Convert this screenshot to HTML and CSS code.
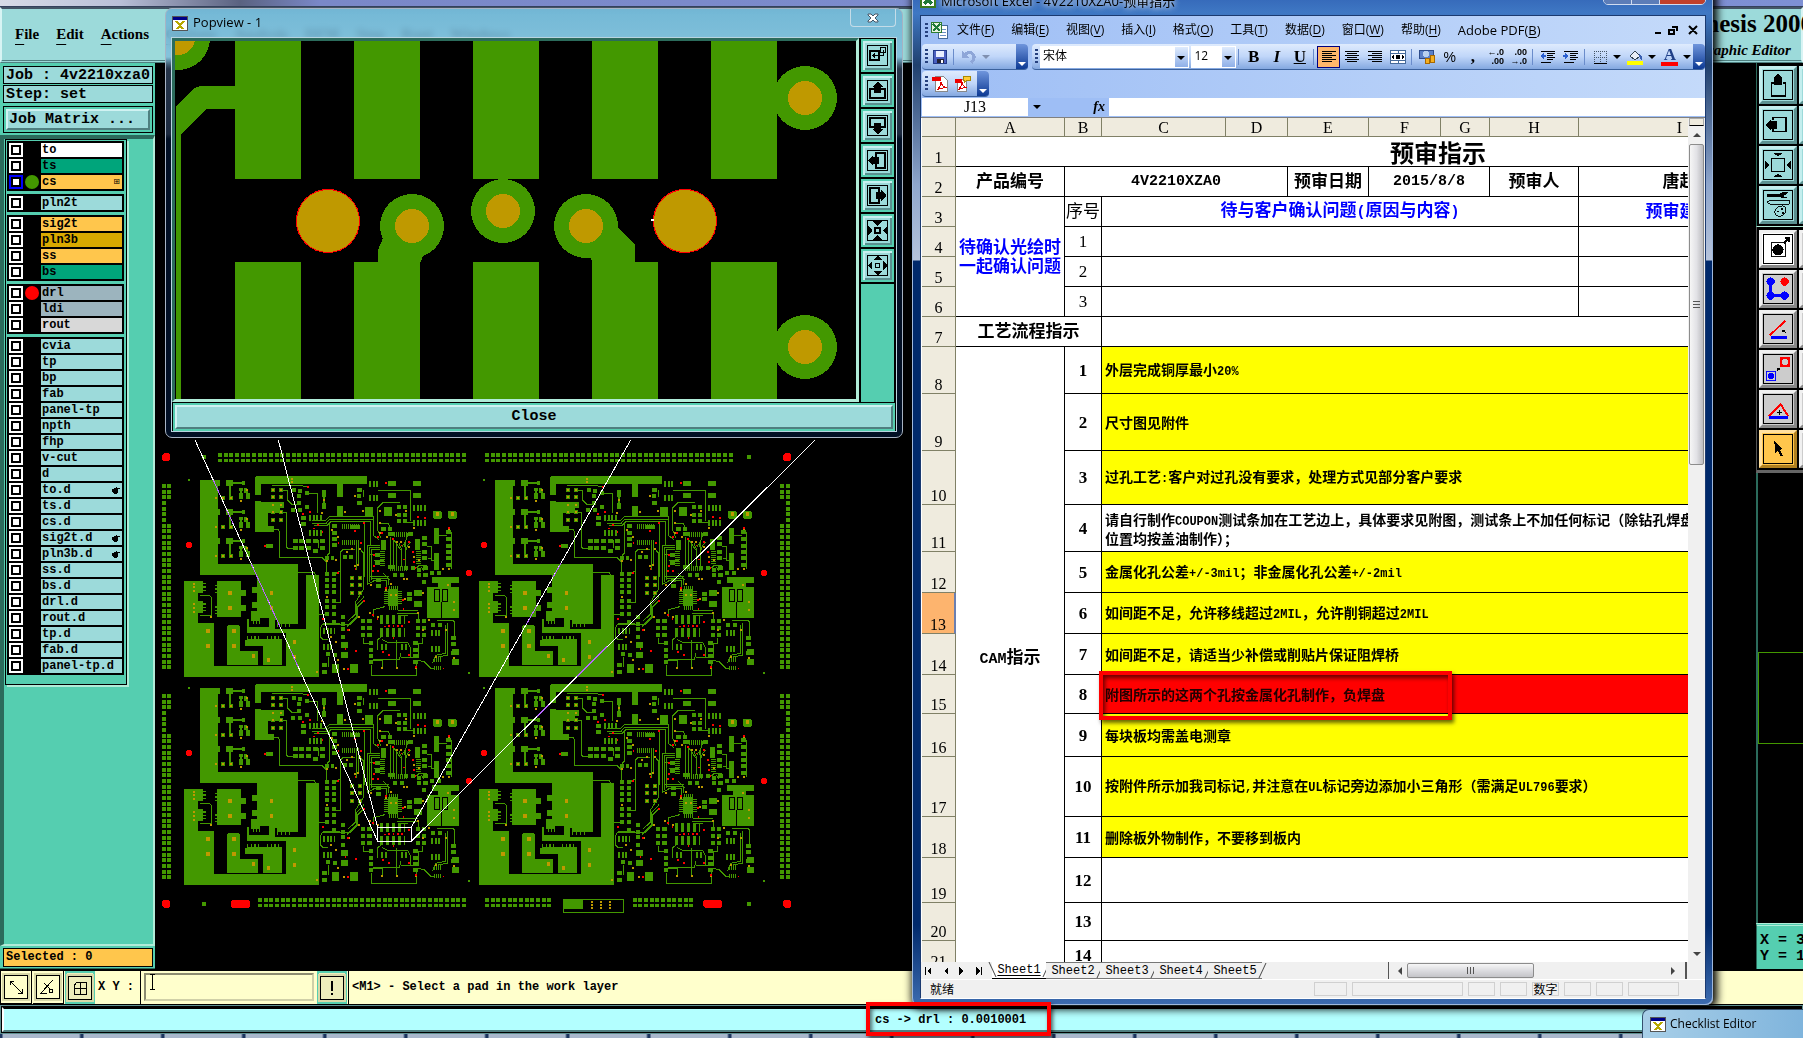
FILE: index.html
```html
<!DOCTYPE html>
<html lang="zh-CN">
<head>
  <meta charset="UTF-8" />
  <title>Genesis 2000 - Graphic Editor</title>
  <link rel="stylesheet" href="styles.css">
</head>
<body>
  <!-- Genesis main window -->
  <div class="genesis">
    <div class="strip-top"></div>
    <header class="menubar">
      <nav class="menus">
        <button><u>F</u>ile</button>
        <button><u>E</u>dit</button>
        <button><u>A</u>ctions</button>
        <button><u>O</u>ptions</button>
        <button>Analysis</button>
        <button>DFM</button>
        <button>Step</button>
        <button>Rout</button>
        <button>Windows</button>
      </nav>
      <div class="brand">
        <strong>Genesis 2000</strong>
        <em>Graphic Editor</em>
      </div>
    </header>

    <div class="work">
      <aside class="side">
        <div class="info">Job : 4v2210xza0</div>
        <div class="info">Step: set</div>
        <div class="matrix"><button class="bevel">Job Matrix ...</button></div>
        <div class="layer-area">
          <div class="layers">
            <div class="group">
              <label class="layer white"><input type="checkbox"><i></i><span>to</span></label>
              <label class="layer green"><input type="checkbox"><i></i><span>ts</span></label>
              <label class="layer orange work-layer"><input type="checkbox"><i class="dot-green"></i><span>cs<b>⊞</b></span></label>
            </div>
            <div class="group">
              <label class="layer"><input type="checkbox"><i></i><span>pln2t</span></label>
            </div>
            <div class="group">
              <label class="layer orange"><input type="checkbox"><i></i><span>sig2t</span></label>
              <label class="layer gold"><input type="checkbox"><i></i><span>pln3b</span></label>
              <label class="layer orange"><input type="checkbox"><i></i><span>ss</span></label>
              <label class="layer green"><input type="checkbox"><i></i><span>bs</span></label>
            </div>
            <div class="group">
              <label class="layer slate"><input type="checkbox"><i class="dot-red"></i><span>drl</span></label>
              <label class="layer slate"><input type="checkbox"><i></i><span>ldi</span></label>
              <label class="layer gray"><input type="checkbox"><i></i><span>rout</span></label>
            </div>
            <div class="group">
              <label class="layer"><input type="checkbox"><i></i><span>cvia</span></label>
              <label class="layer"><input type="checkbox"><i></i><span>tp</span></label>
              <label class="layer"><input type="checkbox"><i></i><span>bp</span></label>
              <label class="layer"><input type="checkbox"><i></i><span>fab</span></label>
              <label class="layer"><input type="checkbox"><i></i><span>panel-tp</span></label>
              <label class="layer"><input type="checkbox"><i></i><span>npth</span></label>
              <label class="layer"><input type="checkbox"><i></i><span>fhp</span></label>
              <label class="layer"><input type="checkbox"><i></i><span>v-cut</span></label>
              <label class="layer"><input type="checkbox"><i></i><span>d</span></label>
              <label class="layer"><input type="checkbox"><i></i><span>to.d<svg class="hand" viewBox="0 0 8 8"><path d="M0 3l3-1 2-2v2h3v1H6v3l-2 2H2L0 6z"/></svg></span></label>
              <label class="layer"><input type="checkbox"><i></i><span>ts.d</span></label>
              <label class="layer"><input type="checkbox"><i></i><span>cs.d</span></label>
              <label class="layer"><input type="checkbox"><i></i><span>sig2t.d<svg class="hand" viewBox="0 0 8 8"><path d="M0 3l3-1 2-2v2h3v1H6v3l-2 2H2L0 6z"/></svg></span></label>
              <label class="layer"><input type="checkbox"><i></i><span>pln3b.d<svg class="hand" viewBox="0 0 8 8"><path d="M0 3l3-1 2-2v2h3v1H6v3l-2 2H2L0 6z"/></svg></span></label>
              <label class="layer"><input type="checkbox"><i></i><span>ss.d</span></label>
              <label class="layer"><input type="checkbox"><i></i><span>bs.d</span></label>
              <label class="layer"><input type="checkbox"><i></i><span>drl.d</span></label>
              <label class="layer"><input type="checkbox"><i></i><span>rout.d</span></label>
              <label class="layer"><input type="checkbox"><i></i><span>tp.d</span></label>
              <label class="layer"><input type="checkbox"><i></i><span>fab.d</span></label>
              <label class="layer"><input type="checkbox"><i></i><span>panel-tp.d</span></label>
            </div>
          </div>
        </div>
        <div class="selected">Selected : 0</div>
      </aside>

      <main class="canvas">
        <svg class="pcb" viewBox="15 -1101 2271 2718">
          <defs>
            <!-- filter stage, repeated three times per board -->
            <g id="cell">
              <path fill="#439800" d="M204 150h6v18h-6zM228 150h21v18h-21zM249 156h27v-3h9v12h-9v-3h-27zM237 168h6v31h6v11h-12zM213 199h12v11h-12zM267 174h12v9h-3v7h3v18h-12v-18h3v-7h-3zM282 174h9v10h3v6h6v16h-12v-16h-6z"/>
              <path stroke="#bf9900" stroke-width="6" d="M195 204h6M216 204h6M240 204h6M288 181h6M270 212h6"/>
            </g>
            <g id="board">
              <g fill="#439800">
                <!-- copper areas -->
                <path d="M150 150h54v252h240v180h-24v9h-3v-9h-9v9h-3v-9h-9v9h-3v-9h-9v9h-3v-21h-6v27h93v-162h39v306H102V453h57v6h9v4h-9v6h9v4h-9v6h9v4h-9v6h-15v25h15v6h9v4h-9v6h9v4h-9v6h9v4h-9v6h-15v30h48v128h216v-99H291v-42h6v24h60v-27h-27v18h-3v-9h-6v9h-3v-9h-6v9h-3v-9h-6v-30h18v-10h-15v-17h15v-28h-15v-17h15v-37H150z"/>
                <path d="M201 453h72v27h15v17h-15v28h15v17h-15v18h-72v-8h-6v-4h6v-5h-6v-4h6v-6h-6v-4h6v-40h-6v-4h6v-6h-6v-4h6v-6h-6v-4h6z"/>
                <path d="M234 586h33l3 3v74h54v42h-93V589zM291 618h4v9h7v-9h4v9h7v-9h4v9h7v-9h4v9h23v-9h4v9h7v-9h4v9h7v-9h4v9h7v-9h4v9h8v78h-57v-57h-54v-18h6z"/>
                <path d="M318 138h333v24h-72v39h-18v-39H333v33h-18v-54zM315 213h18v3h69v18h-12v15h-36v39h18v17h-57z"/>
                <!-- pads -->
                <path d="M645 231h24v27h-24zM702 231h24v27h-24zM561 228h18v33h-18zM714 153h24v14h-24zM789 153h24v14h-24zM714 189h24v14h-24zM789 189h24v14h-24zM852 294h15v47h-15zM852 369h15v50h-15zM792 480h24v18h-24zM792 513h24v18h-24zM573 636h21v18h-21zM573 666h21v18h-21zM546 702h21v27h-21zM600 702h24v27h-24zM516 700h15v12h-15zM516 720h15v12h-15zM906 657h21v18h-21zM906 687h21v18h-21zM348 342h21v12h-21zM516 180h12v20h-3v18h3v18h-12v-18h3v-18h-3zM714 478h30v51h-30zM846 441h81v17h-24v12h24v93h-96v-93h32v-12h-17zM693 330h15v30h-15zM795 327h15v34h-15zM601 284h29v12h-29z"/>
                <rect x="849" y="242" width="27" height="25" rx="7"/>
                <rect x="894" y="242" width="27" height="25" rx="7"/>
              </g>
              <path stroke="#439800" stroke-width="12" d="M363 180h12M387 180h12M363 201h12M387 201h12M363 225h12M363 247h12M387 247h12M363 270h12M387 270h12M426 180h12M444 183h12M465 188h12M442 198h12M442 219h12M465 231h12M424 240h12M443 240h12M453 264h14M453 283h14M429 334h15M447 334h15M468 334h15M489 334h15M510 334h15M429 354h15M447 354h15M468 354h15M489 363h15M510 354h15M546 288h15M546 309h15M546 327h15M546 345h15M526 384h12M543 384h9M580 380h12M597 380h12M525 432h12M546 432h12M525 450h12M546 450h12M525 468h12M546 468h12M525 486h12M546 486h12M525 513h12M546 513h12M525 531h12M546 531h12M525 552h12M546 552h12M546 576h12M600 444h12M624 444h12M600 466h12M624 466h12M600 489h12M624 489h12M573 561h12M573 582h12M573 597h12M573 621h12M621 180h15M621 199h12M621 218h15M741 231h12M760 231h12M741 254h12M760 254h12M741 272h12M760 272h12M694 297h14M713 297h12M714 313h18M774 313h15M816 324h15M816 342h15M816 366h15M816 384h15M889 306h14M889 327h14M889 348h14M889 366h14M889 384h14M889 405h14M783 415h12M801 421h12M820 415h14M801 436h12M820 436h14M840 430h12M860 430h12M816 457h12M771 491h14M771 507h14M675 375h15M675 399h15M714 412h21M762 415h12M729 436h12M750 436h12M678 450h15M678 468h15M633 574h12M652 574h14M633 595h12M652 595h14M633 616h12M652 616h14M798 574h12M816 574h12M798 595h12M816 595h12M798 616h12M816 616h12M657 639h12M657 660h12M657 678h12M657 697h12M790 639h14M790 660h14M790 678h14M790 697h14M843 586h12M864 586h12M904 624h14M904 642h14M904 669h14M528 673h12M549 675h12"/>
              <!-- IC footprints -->
              <g stroke="#439800">
                <path stroke-width="18" stroke-dasharray="6 5" d="M477 264h42M477 309h42M657 162h30M657 205h30M789 234h39M789 279h39M519 603h36M519 651h30M843 609h30M843 656h30M693 651h20M753 651h20"/>
                <path stroke-width="27" stroke-dasharray="10 8" d="M690 568h74M690 607h74"/>
                <path stroke-width="14" stroke-dasharray="3 3" d="M732 313h42M720 416h54M576 290h54M576 338h50M717 474h26M717 533h26M853 689h20M853 714h20"/>
                <path stroke-width="15" stroke-dasharray="3 3" d="M697 362v46M804 362v42M708 482v44M749 482v44"/>
              </g>
              <!-- traces -->
              <g fill="none" stroke="#439800" stroke-width="3">
                <path d="M366 166h84l24 6M399 180h14v30l12 12h20M470 190h32v60M399 247h9v102l4 5h17M372 299h12l5 6v77h126l14 14v30M444 428h48l5 6v112l6 6h22M486 272h40l12-12h132v56l18 14M486 280h42l12-13h128M492 286h40l12-12h118v70M537 280v90l-6 8M684 180h96v94M750 217h-50l-17 17v66l10 24M616 357h-36l-9 9v150h-14M618 345v76M624 345v60M643 282v160M630 357l10 12v110l-24 38v36l-22 20M641 512l-20 20v30l-20 22h-84l-5 8v30l6 6h16M690 345h-37v118l24-12M690 351h-31v106M690 357h-26v92M658 438h60M664 444h50v20M670 450h40v24M720 320v90M729 325v86M738 345v66M747 340l8 20v50M756 350l9-12v78M765 366l8-20 10-10M690 280h24l12 24M732 330l20 30M774 310l-12 40M831 348h14v44h10M833 384l14 0M867 315h24M903 306v110M831 407h-24l-8 8M150 495h27l6 6v56h-32M668 540l36-10M669 562v-22M741 549h64v20M744 540h60M744 556h30M663 705v32h136v-40M669 688h80l3-18M669 690l27 0v24M739 630v84M696 628l16 8h60l10 20v28M639 625l0 14 18 2M684 660l-2-30 10-8M804 690l20 6 18 18h12M862 570h46l6 6v46M893 580v96l-30 4M887 586v84l-30 6-10 24M804 640v43h-50M816 623v16h-14M534 680v30M570 580h-52M590 590l30-30v-36l22-24M555 432l16-10M812 410l10 12M762 276h30M640 200v-20M504 330v24M680 372h-20M672 390h30M700 430l20 20"/>
                <path stroke="#000" d="M853 479h16v36h-16zM877 479h16v36h-16zM873 515v48"/>
              </g>
              <use href="#cell"/>
              <use href="#cell" y="87"/>
              <use href="#cell" y="174"/>
              <!-- drilled holes -->
              <g stroke="#bf9900">
                <path stroke-width="6" d="M129 463h6M129 472h6M129 483h6M129 522h6M129 534h6M129 546h6M423 147h6M423 156h6M366 180h6M390 180h6M366 201h6M390 201h6M366 225h6M390 225h6M366 247h6M390 247h6M366 270h6M390 270h6M603 444h6M627 444h6M603 466h6M627 466h6M603 489h6M627 489h6M720 495h6M735 495h6M519 210h6M613 199h6M582 246h6M513 249h6M636 244h6M687 244h6M765 243h6M735 254h6M687 279h6M789 294h6M894 297h6M543 299h6M562 320h6M604 357h6M627 357h6M687 309h6M708 320h6M738 336h6M750 336h6M774 350h6M789 380h6M804 390h6M894 417h6M876 417h6M528 393h6M555 390h6M588 366h6M612 408h6M621 405h6M660 465h6M528 500h6M705 480h6M720 462h6M760 446h6M768 446h6M816 489h6M762 508h6M801 549h6M657 549h6M680 562h6M624 562h6M834 570h6M594 600h6M555 636h6M540 620h6M498 726h6M579 718h6M693 714h6M738 714h6M795 714h6M909 516h6M909 540h6M890 465h6M180 560h6M816 600h6M885 600h6M909 684h6M561 690h6M855 680h6"/>
                <path stroke-width="12" d="M234 489h12M234 534h12M360 489h9M360 534h9M168 604h12M246 604h12M168 649h12M246 649h12M429 636h9M429 682h9M306 677h9M351 689h9M857 253h10M902 253h10"/>
              </g>
              <path stroke="#f00" stroke-width="5" d="M471 171h5M456 252h5M478 246h5M501 285h5M490 295h5M515 305h5M563 338h5M343 348h5M612 303h5M630 339h5M640 279h5M705 159h5M801 261h5M822 264h5M894 294h5M682 321h5M727 327h5M694 309h5M774 336h5M752 346h5M786 366h5M789 396h5M759 388h5M669 375h5M669 408h5M667 423h5M682 423h5M794 414h5M562 429h5M614 417h5M640 513h5M706 474h5M756 510h5M758 537h5M666 554h5M680 567h5M702 589h5M714 588h5M728 588h5M741 588h5M754 588h5M774 576h5M728 624h5M517 566h5M592 600h5M696 666h5M714 675h5M774 675h5M616 662h5M584 657h5M592 717h5M878 715h5M795 711h5"/>
              <path fill="#f00" d="M112 336h10l4 4v10l-4 4h-10l-4-4v-10zM952 420h10l4 4v10l-4 4h-10l-4-4v-10z"/>
              <path fill="#439800" d="M114 147h6v6h-6zM954 726h6v6h-6z"/>
            </g>
          </defs>
          <use href="#board"/>
          <use href="#board" x="885"/>
          <use href="#board" y="624"/>
          <use href="#board" x="885" y="624"/>
          <!-- coupon strips around the panel -->
          <g stroke="#439800" stroke-dasharray="12 5">
            <path stroke-width="12" d="M204 75h744M1005 75h744M324 1410h624M1005 1410h201M1448 1410h181"/>
            <path stroke-width="9" d="M204 91h744M1005 91h744M324 1426h624M1005 1426h201M1448 1426h181"/>
            <path stroke-width="12" d="M42 162v555M57 162v45M57 281v436M42 792v555M57 792v45M57 911v436M1896 162v45M1896 281v436M1914 162v555M1896 792v45M1896 911v436M1914 792v555"/>
          </g>
          <path fill="#439800" d="M156 75h12v12h-12zM1791 75h12v12h-12zM156 1416h12v12h-12zM1791 1416h12v12h-12zM1241 1408h58v30h-58z"/>
          <path fill="none" stroke="#439800" stroke-width="3" d="M1241 1408h180v38h-180z"/>
          <path fill="none" stroke="#bf9900" stroke-width="6" stroke-dasharray="6 4" d="M1325 1412v28M1353 1412v28M1381 1412v28"/>
          <path fill="#f00" d="M42 69h13l6 6v13l-6 6H42l-6-6V75zM1905 69h13l6 6v13l-6 6h-13l-6-6V75zM42 1409h13l6 6v13l-6 6H42l-6-6v-13zM1905 1409h13l6 6v13l-6 6h-13l-6-6v-13zM248 1409h46l6 6v13l-6 6h-46l-6-6v-13zM1665 1409h46l6 6v13l-6 6h-46l-6-6v-13z"/>
          <!-- popview leader lines, tinted where they cross copper -->
          <g fill="none" stroke-width="3">
            <path stroke="#fff" d="M135 30L683 1234M385 30L683 1192M1442 30L784 1192M1995 30L784 1234M683 1192h101v42H683z"/>
            <path stroke="#b766ff" d="M190 150L210 195M230 240L250 282M304 402L390 590M420 656L444 710M1233 400L1210 440M1160 528L1130 582M1371 650L1281 740M1195 825L1160 860"/>
          </g>
        </svg>
      </main>

      <aside class="tools">
        <div class="tool-grid teal">
          <button class="tool" aria-label="Pan up"><svg viewBox="0 0 30 30"><path fill="none" stroke="#000" stroke-width="2" d="M11 13H8v14h15V13h-3"/><path d="M10 8l5-5 5 5h-1v7h-8V8z"/></svg></button><span></span>
          <button class="tool" aria-label="Pan left"><svg viewBox="0 0 30 30"><path fill="none" stroke="#000" stroke-width="2" d="M10 10V7h14v15H10v-3"/><path d="M7 10l-5 5 5 5v-1h7v-8H7z"/></svg></button><span></span>
          <button class="tool" aria-label="Zoom fit"><svg viewBox="0 0 30 30"><path fill="none" stroke="#000" stroke-width="2" d="M8 8h14v14H8z"/><path d="M10 2h10l-5 4zM10 28h10l-5-4zM1 10v10l5-5zM29 10v10l-5-5z"/></svg></button><span></span>
          <button class="tool" aria-label="Settings"><svg viewBox="0 0 30 30"><path d="M3 3h14l3-2h6l-3 3h-2v2h2l3 2h-6l-3-2H3z"/><path fill="none" stroke="#000" d="M3 12l4-2h20v4H7zM12 20q3-4 8-4 5 1 3 6-1 5-7 5-6-1-4-7z"/><path d="M14 21h2v2h-2zM18 18h2v2h-2zM19 23h2v2h-2z"/></svg></button><span></span>
        </div>
        <div class="tool-grid silver">
          <button class="tool white" aria-label="Select pad"><svg viewBox="0 0 30 30"><path fill="none" stroke="#000" d="M7.500 8.500h15v15h-15z"/><circle cx="15" cy="16" r="6"/><path d="M20 8l4-4h-2V2h6v6h-2V6l-4 4z"/></svg></button><span></span>
          <button class="tool" aria-label="Net"><svg viewBox="0 0 30 30"><path stroke="#00f" stroke-width="3" fill="none" d="M7 7v15h15"/><g fill="#00f"><circle cx="7" cy="7" r="4.500"/><circle cx="7" cy="22" r="4.500"/><circle cx="22" cy="22" r="4.500"/></g><circle cx="22" cy="7" r="4.500" fill="#f00"/></svg></button><span></span>
          <button class="tool" aria-label="Angle"><svg viewBox="0 0 30 30"><path stroke="#f00" stroke-width="2" d="M6 22L23 6"/><path stroke="#00f" stroke-width="3" d="M7 24.500h18"/><path d="M19 16h4l-1 1 2 3-3-2-1 1z"/></svg></button><span></span>
          <button class="tool" aria-label="Snap"><svg viewBox="0 0 30 30"><path fill="none" stroke="#00f" d="M2.500 17.500h10v10h-10z"/><circle cx="7.500" cy="22.500" r="3.500" fill="#00f"/><path fill="#f00" d="M17 2h11v11H17z"/><circle cx="22.500" cy="7.500" r="3.500" fill="#ccc"/><path d="M14 14h3v3l-1-1-2 1z"/></svg></button><span></span>
          <button class="tool" aria-label="Measure"><svg viewBox="0 0 30 30"><path fill="none" stroke="#f00" stroke-width="2" d="M5 23L18 10l8 13"/><path stroke="#00f" stroke-width="3" d="M5 24h21"/><path d="M14 18h5v1h-5zM16 16h1v5h-1z"/></svg></button><span></span>
          <button class="tool orange" aria-label="Pointer"><svg viewBox="0 0 30 30"><path d="M11 6l9 9-3 1 3 6-2 1-3-6-3 3z"/></svg></button><span></span>
        </div>
        <div class="overview"><div></div></div>
        <div class="coords">X = 3<br>Y = 1</div>
      </aside>
    </div>

    <div class="msgbar">
      <button class="mini" aria-label="Distance"><svg viewBox="0 0 20 20"><path fill="none" stroke="#000" d="M4 4l12 12M4 8V4h4M16 12v4h-4"/></svg></button>
      <button class="mini" aria-label="Angle"><svg viewBox="0 0 20 20"><path fill="none" stroke="#000" d="M15 3L3 16h6M6 6l6 6"/><circle cx="13" cy="14" r="2" fill="none" stroke="#000"/></svg></button>
      <button class="mini on" aria-label="Grid"><svg viewBox="0 0 20 20"><path fill="none" stroke="#000" d="M7 4h9v12H4V8zM10.500 4v12M4 10.500h12"/></svg></button>
      <label for="xy">X Y :</label>
      <input id="xy" type="text" value="">
      <button class="mini on" aria-label="Info"><svg viewBox="0 0 20 20"><path d="M9 3h2v10H9zM9 15h2v2H9z"/></svg></button>
      <p>&lt;M1&gt; - Select a pad in the work layer</p>
    </div>
    <div class="statusbar"><div>cs -&gt; drl : 0.0010001</div></div>
    <div class="taskbar"></div>
  </div>
  <svg class="ibeam" viewBox="0 0 5 16"><path fill="none" stroke="#000" d="M0 .500h5M0 15.500h5M2.500 0v16"/></svg>

  <!-- Popview window -->
  <section class="popview">
    <header class="pop-title">
      <svg class="xicon" viewBox="0 0 16 15"><path fill="#fff" stroke="#555" d="M.500.500h15v14H.500z"/><path fill="#008" d="M1 1h14v3H1z"/><path stroke="#b8a800" stroke-width="2" d="M4 5l7 8M12 5l-7 8"/></svg>
      <span>Popview - 1</span>
      <button class="pop-x" aria-label="Close window"><svg viewBox="0 0 12 10"><path fill="#fff" stroke="#456" d="M1 1h3l2 2 2-2h3v1L8 5l3 3v1H8L6 7 4 9H1V8l3-3-3-3z"/></svg></button>
    </header>
    <div class="pop-body">
      <div class="pop-main">
        <svg class="zoomed" viewBox="175 41 681 360" preserveAspectRatio="xMinYMin slice">
          <g fill="#439800">
            <path d="M235 41h66v138h-66zM354 41h66v138h-66zM473 41h66v138h-66zM592 41h66v138h-66zM711 41h66v138h-66z"/>
            <path d="M235 262h66v139h-66zM354 262h66v139h-66zM473 262h66v139h-66zM592 262h66v139h-66zM711 262h66v139h-66z"/>
            <path d="M235 86h-35l-6 2-18 18v295h5V134l25-25h29zM378 262v-12l5-12h50l-10 18-2 6zM610 220l8 8 17 16v18h-43l-2-10z"/>
            <circle cx="178" cy="38" r="32"/><circle cx="412" cy="226" r="32"/><circle cx="503" cy="211" r="32"/>
            <circle cx="586" cy="226" r="32"/><circle cx="805" cy="98" r="32"/><circle cx="805" cy="347" r="32"/>
          </g>
          <g fill="#bf9900">
            <circle cx="178" cy="38" r="17"/><circle cx="412" cy="226" r="17"/><circle cx="503" cy="211" r="17"/>
            <circle cx="586" cy="226" r="17"/><circle cx="805" cy="98" r="17"/><circle cx="805" cy="347" r="17"/>
            <circle cx="328" cy="221" r="31.500" stroke="#f00"/><circle cx="685" cy="221" r="31.500" stroke="#f00"/>
          </g>
          <path fill="#fff" d="M651 219h3v2h-3z"/>
        </svg>
        <div class="pop-tools">
          <button aria-label="Link view"><svg viewBox="0 0 21 21"><path fill="none" stroke="#000" stroke-width="2" d="M3 6h9v9H3z"/><path fill="none" stroke="#000" d="M13.500 2.500h5v5h-5zM6 10.500h10.500V5M8 8.500l-2 2 2 2"/></svg></button>
          <button aria-label="Up"><svg viewBox="0 0 21 21"><path fill="none" stroke="#000" stroke-width="2" d="M7 9H3v9h15V9h-4"/><path d="M5 7l5-5h1l5 5h-2v6H7V7z"/></svg></button>
          <button aria-label="Down"><svg viewBox="0 0 21 21"><path fill="none" stroke="#000" stroke-width="2" d="M7 12H3V3h15v9h-4"/><path d="M5 14l5 5h1l5-5h-2V8H7v6z"/></svg></button>
          <button aria-label="Left"><svg viewBox="0 0 21 21"><path fill="none" stroke="#000" stroke-width="2" d="M9 7V3h9v15H9v-4"/><path d="M6 5l-5 5v1l5 5v-2h6V7H6z"/></svg></button>
          <button aria-label="Right"><svg viewBox="0 0 21 21"><path fill="none" stroke="#000" stroke-width="2" d="M12 7V3H3v15h9v-4"/><path d="M14 5l5 5v1l-5 5v-2H9V7h5z"/></svg></button>
          <button aria-label="Zoom in"><svg viewBox="0 0 21 21"><path fill="none" stroke="#000" stroke-width="2" d="M8 8h5v5H8z"/><path d="M6 1h9l-4 5h-1zM6 20h9l-4-5h-1zM1 6v9l4-4v-1zM20 6v9l-4-4v-1z"/></svg></button>
          <button aria-label="Zoom out"><svg viewBox="0 0 21 21"><path fill="none" stroke="#000" d="M8.500 8.500h4v4h-4z"/><path d="M6 5l4-4h1l4 4zM6 16l4 4h1l4-4zM5 6l-4 4v1l4 4zM16 6l4 4v1l-4 4z"/></svg></button>
          <div class="fill"></div>
        </div>
      </div>
      <div class="pop-foot"><button class="bevel">Close</button></div>
    </div>
  </section>

  <!-- Excel window -->
  <section class="excel">
    <header class="xl-title">
      <svg class="xl-logo" viewBox="0 0 16 16"><path fill="#fff" stroke="#3a7a20" stroke-width="2" d="M1 1h14v14H1z"/><path stroke="#1f7a3a" stroke-width="3" d="M4 4l8 8M12 4l-8 8"/></svg>
      <span>Microsoft Excel - 4V2210XZA0-预审指示</span>
      <div class="caps"><i></i><i></i><i></i></div>
    </header>
    <div class="xl-body">
      <nav class="xl-menu">
        <i class="grip"></i>
        <svg class="xl-doc" viewBox="0 0 17 17"><path fill="#fff" stroke="#456a9a" d="M7.500 3.500h9v13h-9z"/><path stroke="#6b8fc4" d="M9 7.500h6M9 10.500h6M9 13.500h6"/><path fill="#e8f4e0" stroke="#2f7d32" d="M.500.500h10v10H.500z"/><path stroke="#1f7a3a" stroke-width="2" d="M2 2l7 7M9 2L2 9"/></svg>
        <button>文件(<u>F</u>)</button>
        <button>编辑(<u>E</u>)</button>
        <button>视图(<u>V</u>)</button>
        <button>插入(<u>I</u>)</button>
        <button>格式(<u>O</u>)</button>
        <button>工具(<u>T</u>)</button>
        <button>数据(<u>D</u>)</button>
        <button>窗口(<u>W</u>)</button>
        <button>帮助(<u>H</u>)</button>
        <button class="adobe">Adobe PDF(<u>B</u>)</button>
        <svg class="mdi" viewBox="0 0 44 10"><path fill="none" stroke="#000" stroke-width="2" d="M0 8h6M14 5h5v4h-5zM17 2h5v4M34 1l8 8M42 1l-8 8"/></svg>
      </nav>
      <div class="bars">
        <div class="bar first">
          <i class="grip"></i>
          <button class="tb" aria-label="保存"><svg viewBox="0 0 16 16"><path fill="#4a5fc0" stroke="#223a8a" d="M1.500 1.500h13v13h-13z"/><path fill="#e8eeff" d="M4 2h8v6H4z"/><path fill="#223" d="M5 10h7v4H5z"/><path fill="#fff" d="M9 11h2v3H9z"/></svg></button>
          <i class="sep"></i>
          <button class="tb" aria-label="撤销"><svg viewBox="0 0 16 16"><path fill="none" stroke="#8ea6d8" stroke-width="3" d="M2 7q6-6 10-2 3 4-2 9"/><path fill="#8ea6d8" d="M1 2v7h7z"/></svg></button>
          <i class="tri dim"></i>
          <i class="cap"></i>
        </div>
        <div class="bar wide">
          <i class="grip"></i>
          <span class="combo font"><select aria-label="字体"><option>宋体</option></select></span>
          <span class="combo size"><select aria-label="字号"><option>12</option></select></span>
          <i class="sep"></i>
          <button class="tb letter"><b>B</b></button>
          <button class="tb letter"><b><em>I</em></b></button>
          <button class="tb letter"><b><u>U</u></b></button>
          <i class="sep"></i>
          <button class="tb on" aria-label="左对齐"><svg viewBox="0 0 16 16"><path stroke="#000" d="M1 2.500h14M1 4.500h10M1 6.500h14M1 8.500h10M1 10.500h14M1 12.500h10"/></svg></button>
          <button class="tb" aria-label="居中"><svg viewBox="0 0 16 16"><path stroke="#000" d="M1 2.500h14M3 4.500h10M1 6.500h14M3 8.500h10M1 10.500h14M3 12.500h10"/></svg></button>
          <button class="tb" aria-label="右对齐"><svg viewBox="0 0 16 16"><path stroke="#000" d="M1 2.500h14M5 4.500h10M1 6.500h14M5 8.500h10M1 10.500h14M5 12.500h10"/></svg></button>
          <button class="tb" aria-label="合并及居中"><svg viewBox="0 0 16 16"><path fill="#fff" stroke="#456a9a" d="M.500 1.500h15v13H.500zM.500 4.500h15M.500 11.500h15M8 1v3M8 12v3"/><path d="M1 8l3-2v4zM15 8l-3-2v4zM6 6h4v4H6z"/></svg></button>
          <i class="sep"></i>
          <button class="tb" aria-label="货币样式"><svg viewBox="0 0 16 16"><path fill="#5a80c8" stroke="#2d4c8c" d="M.500 1.500h14v8H.500z"/><circle cx="7" cy="5" r="3" fill="#b8d0f0"/><path fill="#f5b020" stroke="#a86800" d="M6.500 9.500h4v5h-4zM11.500 6.500h4v7h-4z"/></svg></button>
          <button class="tb pct">%</button>
          <button class="tb letter"><b>,</b></button>
          <button class="tb dec"><span>←.0<br>.00</span></button>
          <button class="tb dec"><span>.00<br>→.0</span></button>
          <i class="sep"></i>
          <button class="tb" aria-label="减少缩进"><svg viewBox="0 0 16 16"><path stroke="#000" d="M1 2.500h14M7 4.500h8M7 6.500h6M7 8.500h8M7 10.500h6M1 13.500h10"/><path fill="#2a5fd0" d="M0 7l4-3v2h2v2H4v2z"/></svg></button>
          <button class="tb" aria-label="增加缩进"><svg viewBox="0 0 16 16"><path stroke="#000" d="M1 2.500h14M7 4.500h8M7 6.500h6M7 8.500h8M7 10.500h6M1 13.500h10"/><path fill="#2a5fd0" d="M6 7L2 4v2H0v2h2v2z"/></svg></button>
          <i class="sep"></i>
          <button class="tb" aria-label="边框"><svg viewBox="0 0 16 16"><path fill="none" stroke="#456" stroke-dasharray="1 1" d="M2.500 2v11M8.500 2v11M14.500 2v11M2 2.500h13M2 8.500h13"/><path stroke="#000" d="M2 14.500h13"/></svg></button>
          <i class="tri"></i>
          <button class="tb" aria-label="填充颜色"><svg viewBox="0 0 16 16"><path fill="#e8eef8" stroke="#345" d="M3 7l5-5 5 5-5 4z"/><path fill="#3a5fb0" d="M12 5l3 2v5l-2-2z"/><path fill="#ff0" d="M0 12h16v4H0z"/></svg></button>
          <i class="tri"></i>
          <button class="tb fontcolor" aria-label="字体颜色"><b>A</b></button>
          <i class="tri"></i>
          <i class="cap"></i>
        </div>
      </div>
      <div class="bars">
        <div class="bar pdf">
          <i class="grip"></i>
          <button class="tb" aria-label="转换为 PDF"><svg viewBox="0 0 16 16"><path fill="#fff" stroke="#888" d="M3.500.500h8l4 4v11h-12z"/><path fill="#e00" d="M0 1h9v4H0z"/><path fill="none" stroke="#d00" d="M5 14q4-4 4-8 1 5 6 6-5-1-10 2z"/></svg></button>
          <button class="tb" aria-label="转换并发送"><svg viewBox="0 0 16 16"><path fill="#fff" stroke="#888" d="M2.500 3.500h9v12h-9z"/><path fill="#e00" d="M0 3h7v4H0z"/><path fill="none" stroke="#d00" d="M3 14q4-4 4-8 1 5 5 6-5-1-9 2z"/><path fill="#fc3" stroke="#a80" d="M8.500.500h7v4h-4l-2 2v-2h-1z"/></svg></button>
          <i class="cap"></i>
        </div>
      </div>
      <div class="formula">
        <input class="namebox" type="text" value="J13" aria-label="名称框">
        <i class="tri"></i>
        <em>fx</em>
        <input class="fx" type="text" value="" aria-label="编辑栏">
      </div>

      <div class="grid-area">
        <div class="sheet">
          <table>
            <colgroup><col class="c0"><col class="ca"><col class="cb"><col class="cc"><col class="cd"><col class="ce"><col class="cf"><col class="cg"><col class="ch"><col class="ci"><col class="cj"></colgroup>
            <tr class="head"><th></th><th>A</th><th>B</th><th>C</th><th>D</th><th>E</th><th>F</th><th>G</th><th>H</th><th>I</th><th></th></tr>
            <tr class="h30"><th>1</th><td colspan="10" class="title">预审指示</td></tr>
            <tr class="h30 strong"><th>2</th><td>产品编号</td><td colspan="3" class="mono">4V2210XZA0</td><td>预审日期</td><td colspan="2" class="mono">2015/8/8</td><td>预审人</td><td>唐超</td><td></td></tr>
            <tr class="h30 strong"><th>3</th><td rowspan="4" class="blue wrap">待确认光绘时<br>一起确认问题</td><td class="plain">序号</td><td colspan="6" class="blue">待与客户确认问题<span class="mono">(</span>原因与内容<span class="mono">)</span></td><td class="blue">预审建议</td><td></td></tr>
            <tr class="h30"><th>4</th><td>1</td><td colspan="6"></td><td></td><td></td></tr>
            <tr class="h30"><th>5</th><td>2</td><td colspan="6"></td><td></td><td></td></tr>
            <tr class="h30"><th>6</th><td>3</td><td colspan="6"></td><td></td><td></td></tr>
            <tr class="h30 strong"><th>7</th><td colspan="2">工艺流程指示</td><td colspan="8"></td></tr>
            <tr class="h47"><th>8</th><td rowspan="14" class="cam"><span class="mono">CAM</span>指示</td><td class="no">1</td><td colspan="8" class="note">外层完成铜厚最小<span class="en">20%</span></td></tr>
            <tr class="h57"><th>9</th><td class="no">2</td><td colspan="8" class="note">尺寸图见附件</td></tr>
            <tr class="h54"><th>10</th><td class="no">3</td><td colspan="8" class="note">过孔工艺<span class="en">:</span>客户对过孔没有要求，处理方式见部分客户要求</td></tr>
            <tr class="h47"><th>11</th><td class="no">4</td><td colspan="8" class="note clear">请自行制作<span class="en">COUPON</span>测试条加在工艺边上，具体要求见附图，测试条上不加任何标记（除钻孔焊盘<br>位置均按盖油制作）；</td></tr>
            <tr class="h41"><th>12</th><td class="no">5</td><td colspan="8" class="note">金属化孔公差<span class="en">+/-3mil</span>；非金属化孔公差<span class="en">+/-2mil</span></td></tr>
            <tr class="h41"><th class="active">13</th><td class="no">6</td><td colspan="8" class="note">如间距不足，允许移线超过<span class="en">2MIL</span>，允许削铜超过<span class="en">2MIL</span></td></tr>
            <tr class="h41"><th>14</th><td class="no">7</td><td colspan="8" class="note">如间距不足，请适当少补偿或削贴片保证阻焊桥</td></tr>
            <tr class="h39"><th>15</th><td class="no">8</td><td colspan="8" class="note alert">附图所示的这两个孔按金属化孔制作，负焊盘</td></tr>
            <tr class="h43"><th>16</th><td class="no">9</td><td colspan="8" class="note">每块板均需盖电测章</td></tr>
            <tr class="h60"><th>17</th><td class="no">10</td><td colspan="8" class="note">按附件所示加我司标记<span class="en">,</span>并注意在<span class="en">UL</span>标记旁边添加小三角形（需满足<span class="en">UL796</span>要求）</td></tr>
            <tr class="h41"><th>18</th><td class="no">11</td><td colspan="8" class="note">删除板外物制作，不要移到板内</td></tr>
            <tr class="h45"><th>19</th><td class="no">12</td><td colspan="8"></td></tr>
            <tr class="h38"><th>20</th><td class="no">13</td><td colspan="8"></td></tr>
            <tr class="h30"><th>21</th><td class="no">14</td><td colspan="8"></td></tr>
          </table>
        </div>
        <div class="vscroll">
          <i class="split"></i>
          <i class="arr up"></i>
          <div class="thumb"><i></i><i></i><i></i></div>
          <i class="arr down"></i>
        </div>
      </div>

      <div class="tabs">
        <svg class="nav" viewBox="0 0 64 10"><path d="M3 1h1v8H3zM9 1v8L5 5zM26 1v8l-4-4zM37 1v8l4-4zM54 1v8l4-4zM59 1h1v8h-1z"/></svg>
        <button class="tab current">Sheet1</button>
        <button class="tab">Sheet2</button>
        <button class="tab">Sheet3</button>
        <button class="tab">Sheet4</button>
        <button class="tab">Sheet5</button>
        <div class="hscroll">
          <i class="arr left"></i>
          <div class="thumb"><i></i><i></i><i></i></div>
          <i class="arr right"></i>
        </div>
      </div>
      <footer class="xl-status">
        <span class="ready">就绪</span>
        <i class="w33"></i><i class="w111"></i><i class="w27"></i><i class="w27"></i><span class="num">数字</span><i class="w27"></i><i class="w27"></i><i class="w51"></i>
      </footer>
    </div>
  </section>

  <section class="checklist">
    <svg class="xicon" viewBox="0 0 16 15"><path fill="#fff" stroke="#555" d="M.500.500h15v14H.500z"/><path fill="#008" d="M1 1h14v3H1z"/><path stroke="#b8a800" stroke-width="2" d="M4 5l7 8M12 5l-7 8"/></svg>
    <span>Checklist Editor</span>
  </section>

  <!-- red marks -->
  <div class="mark note-mark"></div>
  <div class="mark status-mark"></div>
</body>
</html>
```
FILE: styles.css
```css
* { box-sizing: border-box; }

html, body { height: 100%; }

body {
  margin: 0;
  position: relative;
  overflow: hidden;
  background: #000;
  color: #000;
  font-family: "Liberation Sans", "Noto Sans CJK SC", sans-serif;
}

button {
  border: 0;
  padding: 0;
  margin: 0;
  background: none;
  color: inherit;
  font: inherit;
}

input, select { font: inherit; border: 0; margin: 0; padding: 0; border-radius: 0; }
svg { display: block; shape-rendering: crispEdges; }

/* ---------- Genesis ---------- */
.genesis { height: 100%; display: flex; flex-direction: column; }

.strip-top {
  height: 7px;
  background: linear-gradient(90deg, #d8dbe6 0, #b9bfd8 120px, #5a6280 240px, #7a88c8 320px, #7e90d4 100%);
  border-bottom: 1px solid #35405c;
}

.menubar {
  height: 56px;
  display: flex;
  align-items: center;
  justify-content: space-between;
  padding: 0 0 0 13px;
  background: #9cdada;
  border: 2px solid #d8f4f4;
  border-top-color: #456;
  border-bottom: 3px double #4f7f80;
  flex: none;
}

.menus { display: flex; gap: 17px; font: bold 15px "Liberation Serif", serif; }
.menus button { line-height: 17px; }
.menus u { text-underline-offset: 5px; }

.brand { display: flex; flex-direction: column; align-items: center; margin-right: -12px; font-family: "Liberation Serif", serif; white-space: nowrap; }
.brand strong { font-size: 25px; line-height: 30px; }
.brand em { font-size: 15px; line-height: 22px; font-weight: bold; }

.work { flex: 1; display: flex; min-height: 0; background: #000; }

.side {
  width: 155px;
  flex: none;
  display: flex;
  flex-direction: column;
  padding: 3px 2px 1px 3px;
  background: #55ceb0;
  border-bottom: 1px solid #2b6b5c;
}

.info {
  height: 18px;
  margin-bottom: 1px;
  padding-left: 2px;
  border: 1px solid #000;
  background: #9cdada;
  font: bold 15px/18px "Liberation Mono", monospace;
  white-space: nowrap;
}

.matrix { height: 27px; margin: 2px 0; padding: 2px; border: 1px solid #000; display: flex; }

.bevel {
  flex: 1;
  background: #9cdada;
  border: 2px solid;
  border-color: #d0f2f2 #4f7f80 #4f7f80 #d0f2f2;
  font: bold 15px/18px "Liberation Mono", monospace;
}
.matrix .bevel { text-align: left; padding-left: 1px; }

.layer-area {
  flex: 1;
  margin: 0 -2px 2px -3px;
  padding-left: 1px;
  border: solid;
  border-width: 4px 2px 2px 4px;
  border-color: #2b6b5c #b0ecd8 #b0ecd8 #2b6b5c;
}

.layers {
  width: 122px;
  padding: 1px 2px 9px 1px;
  border: 1px solid #000;
  box-shadow: 2px 2px 0 #b0ecd8;
  display: flex;
  flex-direction: column;
  gap: 3px;
}

.group { background: #000; padding: 2px; display: flex; flex-direction: column; gap: 2px; }

.layer { display: flex; height: 14px; font: bold 12px/14px "Liberation Mono", monospace; }
.layer input {
  appearance: none;
  width: 14px;
  height: 14px;
  border: 2px solid #fff;
  background: #fff;
  box-shadow: inset 0 0 0 2px #000;
}
.work-layer input { border-color: #00f; }
.layer i { width: 14px; height: 14px; margin: 0 2px; border-radius: 50%; }
.dot-green { background: #439800; }
.dot-red { background: #f00; }
.layer span {
  flex: 1;
  display: flex;
  justify-content: space-between;
  align-items: center;
  padding: 0 2px 0 1px;
  background: #9cdada;
}
.layer span b { font: 8px/8px "DejaVu Sans", sans-serif; }
.white span { background: #fff; }
.green span { background: #00a57b; }
.orange span { background: #ffc64c; }
.gold span { background: #d9a900; }
.slate span { background: #9cb4be; }
.gray span { background: #d8d8d8; }
.hand { width: 8px; height: 8px; }

.selected {
  height: 19px;
  padding-left: 2px;
  border: 1px solid #000;
  background: #ffc64c;
  font: bold 12px/17px "Liberation Mono", monospace;
}

.canvas { flex: 1; overflow: hidden; }
.pcb { width: 757px; height: 906px; }

.tools {
  width: 47px;
  flex: none;
  display: flex;
  flex-direction: column;
  overflow: hidden;
}
.tool-grid {
  display: grid;
  grid-template-columns: 38px 38px;
  gap: 2px;
  padding: 3px 2px 2px;
  border-left: 1px solid #2b6b5c;
}
.tool-grid.teal { border-bottom: 1px solid #b0ecd8; }
.tool-grid.silver { border-bottom: 3px solid #666; border-left-color: #555; }
.tool, .tool-grid span {
  height: 38px;
  border: 3px solid;
  border-color: #c4eeee #5b9090 #5b9090 #c4eeee;
  background: #9cdada;
  display: flex;
  align-items: center;
  justify-content: center;
}
.tool svg { width: 30px; height: 30px; border: 1px solid #000; }
.silver .tool, .silver span { background: #ccc; border-color: #f0f0f0 #888 #888 #f0f0f0; }
.silver .white { background: #fff; }
.silver .orange { background: #ffc64c; border-color: #ffe0a0 #b08020 #b08020 #ffe0a0; }

.overview { flex: 1; display: flex; align-items: center; border-left: 2px solid #2b6b5c; }
.overview div { height: 92px; flex: 1; border: solid #439800; border-width: 1px 0 1px 1px; }
.coords {
  height: 46px;
  padding: 7px 0 0 3px;
  background: #55ceb0;
  border-top: 3px double #b0ecd8;
  border-left: 1px solid #2b6b5c;
  font: bold 15px/16px "Liberation Mono", monospace;
  white-space: nowrap;
}

.msgbar {
  height: 36px;
  flex: none;
  display: flex;
  align-items: stretch;
  background: #ffffcc;
  border: solid #000;
  border-width: 2px 0 1px 1px;
  font: bold 12px/32px "Liberation Mono", monospace;
}
.mini {
  width: 31px;
  padding: 3px;
  margin-right: 1px;
  border-right: 1px solid #000;
  border-bottom: 1px solid #000;
  background: #ffffcc;
}
.mini svg { width: 24px; height: 24px; padding: 1px; border: 1px solid #000; outline: 2px solid #d8d8a8; }
.mini.on { width: 30px; border: 2px solid #55ceb0; padding: 2px 1px; background: #eeeebb; }
.msgbar label { width: 45px; padding-left: 2px; border-right: 1px solid #000; }
.msgbar input {
  width: 170px;
  margin: 2px 3px 3px 3px;
  border: 2px solid;
  border-color: #8c8c70 #d0d0a8 #d0d0a8 #8c8c70;
  background: #ffffcc;
}
.msgbar p { margin: 0; padding-left: 3px; border-left: 1px solid #000; }

.statusbar { height: 29px; flex: none; padding: 2px; background: #5f9090; display: flex; }
.statusbar div {
  flex: 1;
  padding-left: 871px;
  background: #b3ffff;
  border: 2px solid;
  border-color: #000 #000 #4f7f80 #fff;
  outline: 1px solid #000;
  font: bold 12px/22px "Liberation Mono", monospace;
}
.taskbar { height: 4px; flex: none; background: repeating-linear-gradient(90deg, #1c355f 0, #1c355f 2px, #a9b7cc 3px, #a9b7cc 79px, #1c355f 81px); }

/* mouse pointer over the coordinate field */
.ibeam { position: absolute; left: 150px; bottom: 48px; width: 5px; height: 16px; }

/* ---------- Popview ---------- */
.popview {
  position: absolute;
  left: 165px;
  top: 8px;
  width: 738px;
  height: 430px;
  padding: 0 5px 5px;
  border: 1px solid #a8b4c4;
  border-radius: 7px;
  display: flex;
  flex-direction: column;
  background: linear-gradient(rgba(108, 178, 213, 0.84) 0, rgba(128, 190, 220, 0.84) 48px, #26354a 60px, #1c2a40 125px, #010f24 130px);
  backdrop-filter: blur(3px);
}
.pop-title {
  height: 28px;
  flex: none;
  display: flex;
  align-items: center;
  padding: 0 1px;
  gap: 5px;
  font: 13px/26px "Open Sans", sans-serif;
}
.pop-title span { flex: 1; padding-bottom: 2px; }
.xicon { width: 16px; height: 15px; }
.pop-x {
  width: 46px;
  height: 18px;
  align-self: flex-start;
  display: flex;
  align-items: center;
  justify-content: center;
  border: 1px solid #c4dce8;
  border-top: 0;
  border-radius: 0 0 4px 4px;
}
.pop-x svg { width: 12px; height: 10px; shape-rendering: auto; }
.pop-body { flex: 1; min-height: 0; display: flex; flex-direction: column; border: 1px solid #b8d4e0; background: #000; }
.pop-main { flex: 1; min-height: 0; display: flex; }
.zoomed {
  flex: 1;
  min-width: 0;
  height: 100%;
  border: solid;
  border-width: 3px;
  border-color: #2b6b5c #b0ecd8 #b0ecd8 #2b6b5c;
}
.pop-tools { width: 37px; padding: 1px 2px 0; display: flex; flex-direction: column; gap: 2px; }
.pop-tools button {
  height: 33px;
  flex: none;
  padding: 3px;
  background: #9cdada;
  border: 2px solid #55ceb0;
  box-shadow: inset 2px 2px 0 #c8f0f0, inset -2px -2px 0 #5b9090;
  display: flex;
  align-items: center;
  justify-content: center;
}
.pop-tools svg { width: 21px; height: 21px; outline: 1px solid #000; outline-offset: -1px; }
.pop-tools .fill { flex: 1; background: #55ceb0; }
.pop-foot { height: 28px; flex: none; display: flex; margin: 1px 1px 0; padding: 2px; background: #55ceb0; }

/* ---------- Excel ---------- */
.excel {
  position: absolute;
  left: 912px;
  top: -15px;
  width: 801px;
  bottom: 33px;
  padding: 0 7px 6px 8px;
  border-radius: 7px;
  background: linear-gradient(#2d5cb0 0, #3f78c4 28px, #20406e 80px, #8fa6cc 200px, #b6c4dc 275px, #00296b 276px, #00296b 940px, #3d6cb0 100%);
  box-shadow: inset 1px 0 0 #9fb8dc, inset -1px -1px 0 #9fb8dc, 2px 2px 8px 2px #000;
  display: flex;
  flex-direction: column;
}
.xl-title {
  height: 30px;
  flex: none;
  display: flex;
  align-items: center;
  gap: 5px;
  font: 13px/18px "Open Sans", "Noto Sans CJK SC", sans-serif;
  text-shadow: 0 0 6px #fff, 0 0 6px #cde;
}
.xl-title span { flex: 1; padding-top: 2px; }
.xl-logo { width: 16px; height: 16px; }
.caps { align-self: flex-start; display: flex; width: 103px; height: 20px; border: 1px solid #d0dcf0; border-radius: 0 0 5px 5px; overflow: hidden; }
.caps i { width: 28px; border-right: 1px solid #d0dcf0; background: #5c7db8; }
.caps i:last-child { flex: 1; background: #c0402c; border: 0; }

.xl-body { flex: 1; min-height: 0; display: flex; flex-direction: column; background: #9ebef5; border: 1px solid #1b3a70; border-bottom-color: #fff; }

.xl-menu {
  height: 28px;
  flex: none;
  display: flex;
  align-items: center;
  gap: 17px;
  padding-left: 4px;
  background: linear-gradient(90deg, #9ebef5, #c4dafa);
  font: 12px/16px "Open Sans", "Noto Sans CJK SC", sans-serif;
  white-space: nowrap;
}
.xl-menu u { text-underline-offset: 2px; }
.xl-menu .adobe { font-size: 13px; }
.xl-doc { width: 17px; height: 17px; margin: 0 -8px 0 -14px; }
.mdi { width: 44px; height: 10px; margin: 0 6px 0 auto; shape-rendering: auto; }
.grip { width: 3px; height: 15px; flex: none; background: repeating-linear-gradient(#27417f 0, #27417f 2px, transparent 2px, transparent 4px); }

.bars { display: flex; gap: 4px; height: 27px; flex: none; padding: 0 0 1px 1px; background: linear-gradient(90deg, #9ebef5, #c4dafa); }
.bar {
  display: flex;
  align-items: center;
  padding-left: 3px;
  border-radius: 4px;
  overflow: hidden;
  background: linear-gradient(#dfebfd, #c0d6f9 50%, #84a8e0);
  border-bottom: 1px solid #3b619c;
}
.bar.first { width: 106px; }
.bar.wide { flex: 1; }
.bar.pdf { width: 67px; }
.tb { width: 23px; height: 22px; flex: none; display: flex; align-items: center; justify-content: center; }
.tb svg { width: 16px; height: 16px; }
.tb.on { background: #ffb66b; border: 1px solid #000080; }
.letter { font: 17px/20px "Liberation Serif", serif; }
.pct { font: 14px/20px "Liberation Sans", sans-serif; }
.dec { font: bold 9px/9px "Liberation Sans", sans-serif; text-align: right; }
.fontcolor { height: 18px; border-bottom: 4px solid #f00; width: 17px; margin: 0 3px; font: 17px/14px "Liberation Serif", serif; color: #1f3f88; }
.sep { width: 6px; height: 16px; flex: none; border-left: 1px solid #6a8ccb; margin-left: 2px; margin-right: -2px; }
.tri { width: 12px; height: 22px; flex: none; display: flex; align-items: center; justify-content: center; }
.tri::before { content: ""; border: solid transparent; border-width: 4px 4px 0; border-top-color: #000; }
.tri.dim::before { border-top-color: #8090b0; }
.cap { width: 12px; align-self: stretch; margin-left: auto; background: linear-gradient(#6f95dc, #0d3a94); display: flex; align-items: flex-end; justify-content: center; padding-bottom: 3px; }
.cap::before { content: ""; border: solid transparent; border-width: 4px 4px 0; border-top-color: #fff; }

.combo { position: relative; height: 22px; margin-left: 2px; background: #fff; }
.combo select { appearance: none; width: 100%; height: 20px; padding-left: 3px; background: none; font: 12px/20px "Open Sans", "Noto Sans CJK SC", sans-serif; }
.combo::after {
  content: "";
  position: absolute;
  right: 1px;
  top: 1px;
  width: 13px;
  height: 20px;
  background: linear-gradient(#dfebfd, #8fb0e8);
  pointer-events: none;
}
.combo::before {
  content: "";
  position: absolute;
  z-index: 1;
  right: 4px;
  top: 10px;
  border: solid transparent;
  border-width: 4px 4px 0;
  border-top-color: #000;
}
.font { width: 153px; }
.size { width: 46px; }

.formula { height: 20px; flex: none; display: flex; align-items: center; padding: 0 0 1px 1px; border-bottom: 1px solid #808080; }
.namebox { width: 106px; height: 18px; text-align: center; background: #fff; font: 16px/18px "Liberation Serif", serif; }
.formula .tri { margin-left: 3px; }
.formula em { flex: none; width: 66px; text-align: right; padding-right: 4px; font: italic bold 14px/18px "Liberation Serif", serif; }
.fx { flex: 1; height: 18px; background: #fff; }

.grid-area { flex: 1; min-height: 0; display: flex; background: #fff; padding-left: 1px; }
.sheet { flex: 1; min-width: 0; overflow: hidden; }

table { width: 999px; table-layout: fixed; border-collapse: separate; border-spacing: 0; }
.c0 { width: 34px; } .ca { width: 109px; } .cb { width: 37px; } .cc { width: 124px; }
.cd { width: 62px; } .ce { width: 81px; } .cf { width: 72px; } .cg { width: 49px; }
.ch { width: 89px; } .ci { width: 202px; } .cj { width: 140px; }

th, td { padding: 0; border: solid #000; border-width: 0 1px 1px 0; white-space: nowrap; overflow: hidden; text-align: center; }
th {
  border-color: #808066;
  background: #efebde;
  vertical-align: bottom;
  font: 16px/16px "Liberation Serif", serif;
}
td { font: 17px/19px "Liberation Serif", "Noto Sans CJK SC", serif; }
.head { height: 19px; }
.h30 { height: 30px; } .h38 { height: 38px; } .h39 { height: 39px; } .h41 { height: 41px; }
.h43 { height: 43px; } .h45 { height: 45px; } .h47 { height: 47px; } .h54 { height: 54px; }
.h57 { height: 57px; } .h60 { height: 60px; }
.active { background: #fdb46e; border-right: 2px solid #6b7fb0; }
.strong td, .cam, .no { font-weight: bold; }
.strong .plain { font-weight: normal; }
td.title { font: bold 24px/28px "Noto Sans CJK SC", sans-serif; }
td.blue { color: #00f; }
td.mono, td .mono { font-family: "Liberation Mono", monospace; font-size: 15px; }
td.note { padding-left: 3px; text-align: left; background: #ff0; font: bold 14px/16px "Noto Sans CJK SC", sans-serif; }
td.clear { background: #fff; }
td.alert { background: #f00; color: #200; }
.en { font-family: "Liberation Mono", monospace; font-size: 12px; }

.vscroll { width: 17px; flex: none; display: flex; flex-direction: column; align-items: center; background: #f0f0f0; }
.split { width: 15px; height: 8px; border: 1px solid #aaa; border-bottom: 1px solid #000; background: #efebde; }
.arr { width: 0; height: 0; border: 4px solid transparent; flex: none; }
.up { border-bottom-color: #444; margin: 3px 0 7px; }
.down { border-top-color: #444; margin: auto 0 2px; }
.vscroll .thumb { width: 15px; height: 321px; border: 1px solid #8c8c8c; border-radius: 2px; background: linear-gradient(90deg, #f6f6f6, #e2e2e6 50%, #bcbcc0); display: flex; flex-direction: column; align-items: center; justify-content: center; gap: 2px; }
.vscroll .thumb i { width: 7px; height: 1px; background: #555; }

.tabs { height: 18px; flex: none; display: flex; padding-left: 1px; background: #f0f0f0; border-bottom: 1px solid #fff; }
.nav { width: 64px; height: 10px; margin: 4px 0; }
.tab { position: relative; width: 54px; font: 12px/16px "Liberation Mono", monospace; border-top: 1px solid #777; border-bottom: 1px solid #777; background: #f0f0f0; }
.tab::after { content: ""; position: absolute; right: -1px; top: 0; width: 1px; height: 15px; background: #444; transform: skewX(-25deg); }
.current { margin-left: 6px; background: #fff; border-top: 0; border-bottom-color: #000; text-decoration: underline; text-underline-offset: 2px; }
.current::before { content: ""; position: absolute; left: 0; top: 0; width: 1px; height: 15px; background: #444; transform: skewX(25deg); }
.hscroll { width: 299px; margin: 0 18px 0 auto; display: flex; align-items: center; border: solid #555; border-width: 0 2px 0 1px; padding: 0 6px 0 5px; }
.left { border-right-color: #444; }
.right { border-left-color: #444; margin-left: auto; }
.hscroll .thumb { width: 127px; height: 15px; margin-left: 5px; border: 1px solid #8c8c8c; border-radius: 2px; background: linear-gradient(#f6f6f6, #dcdce0 50%, #c4c4c8); display: flex; align-items: center; justify-content: center; gap: 2px; }
.hscroll .thumb i { width: 1px; height: 7px; background: #555; }

.xl-status { height: 18px; flex: none; display: flex; align-items: center; gap: 5px; padding: 0 26px 0 9px; background: #f0f0f0; font: 12px/16px "Noto Sans CJK SC", sans-serif; }
.ready { margin-right: auto; }
.xl-status i, .num { height: 14px; border: 1px solid #d0d0d0; }
.num { width: 27px; line-height: 12px; text-align: center; }
.w27 { width: 27px; } .w33 { width: 33px; } .w51 { width: 51px; } .w111 { width: 111px; }

/* ---------- small windows and marks ---------- */
.checklist {
  position: absolute;
  right: 0;
  bottom: 0;
  width: 161px;
  height: 29px;
  padding-left: 7px;
  display: flex;
  align-items: center;
  gap: 4px;
  border: solid #35506e;
  border-width: 1px 0 0 1px;
  border-radius: 7px 0 0 0;
  background: linear-gradient(90deg, #a8cfe8, #7fb4dc);
  font: 12px/26px "Open Sans", sans-serif;
}

.mark { position: absolute; border: 4px solid #f00; box-shadow: 2px 3px 4px rgba(0, 0, 0, 0.6), inset 2px 3px 4px rgba(0, 0, 0, 0.6); }
.note-mark { left: 1099px; top: 671px; width: 353px; height: 49px; }
.status-mark { left: 866px; bottom: 2px; width: 185px; height: 34px; }
```
